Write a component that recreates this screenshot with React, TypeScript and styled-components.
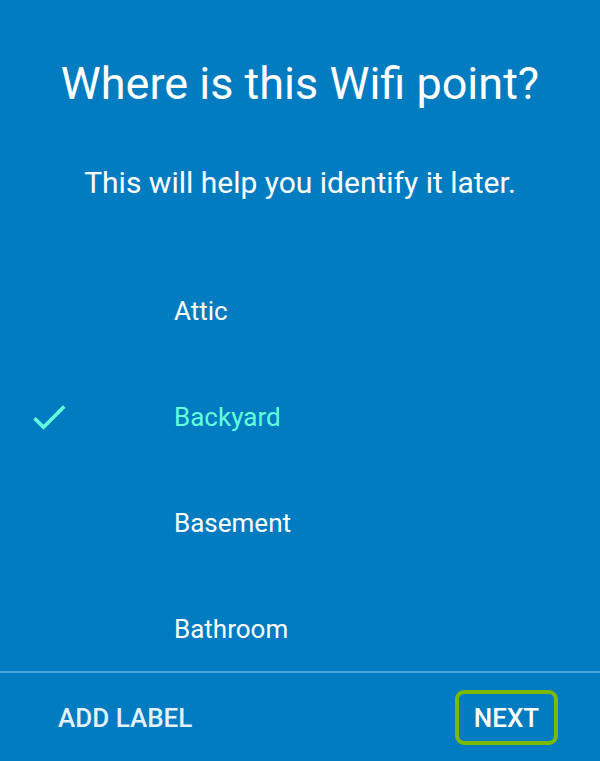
import React, { useState } from "react";
import styled, { createGlobalStyle } from "styled-components";

const GlobalStyle = createGlobalStyle`
  html, body {
    margin: 0;
    padding: 0;
    background: #017cc0;
  }
  body {
    font-family: Roboto, "Noto Sans", "Liberation Sans", sans-serif;
    -webkit-font-smoothing: antialiased;
  }
  * { box-sizing: border-box; }
`;

const Screen = styled.div`
  width: 600px;
  height: 761px;
  background: #017cc0;
  color: #ffffff;
  display: flex;
  flex-direction: column;
  overflow: hidden;
`;

const Header = styled.header`
  display: flex;
  flex-direction: column;
  align-items: center;
  padding-top: 58px;
`;

const Title = styled.h1`
  margin: 0;
  font-size: 45px;
  line-height: 52px;
  font-weight: 400;
  text-align: center;
`;

const Subtitle = styled.p`
  margin: 55px 0 0;
  font-size: 30px;
  line-height: 36px;
  font-weight: 400;
  text-align: center;
`;

const List = styled.ul`
  list-style: none;
  margin: 57px 0 0;
  padding: 0;
  flex: 1;
  overflow: hidden;
`;

const Row = styled.li<{ $selected: boolean }>`
  height: 106px;
  display: grid;
  grid-template-columns: 44px 1fr;
  column-gap: 103px;
  align-items: center;
  padding-left: 27px;
  font-size: 26px;
  color: ${(p) => (p.$selected ? "#64ffda" : "#ffffff")};
  cursor: pointer;
`;

const CheckSlot = styled.span`
  width: 44px;
  height: 44px;
  display: flex;
`;

const Footer = styled.footer`
  flex: 0 0 90px;
  border-top: 2px solid #4fa6da;
  display: flex;
  align-items: center;
  justify-content: space-between;
  padding: 0 42px 0 58px;
`;

const TextButton = styled.button`
  background: none;
  border: none;
  padding: 2px 0 0;
  font-family: inherit;
  font-size: 26px;
  line-height: 32px;
  font-weight: 500;
  color: #e3f1fb;
`;

const NextButton = styled.button`
  background: none;
  border: 4px solid #7cb905;
  border-radius: 9px;
  height: 55px;
  width: 103px;
  padding: 2px 0 0;
  font-family: inherit;
  font-size: 26px;
  line-height: 32px;
  font-weight: 500;
  color: #ffffff;
`;

const CheckIcon = () => (
  <svg width="44" height="44" viewBox="0 0 24 24" fill="#64ffda">
    <path d="M9 16.17L4.83 12l-1.42 1.41L9 19 21 7l-1.41-1.41z" />
  </svg>
);

const places = ["Attic", "Backyard", "Basement", "Bathroom"];

export default function App() {
  const [selected, setSelected] = useState("Backyard");
  return (
    <>
      <GlobalStyle />
      <Screen>
        <Header>
          <Title>Where is this Wifi point?</Title>
          <Subtitle>This will help you identify it later.</Subtitle>
        </Header>
        <List>
          {places.map((name) => (
            <Row
              key={name}
              $selected={name === selected}
              onClick={() => setSelected(name)}
            >
              <CheckSlot>{name === selected && <CheckIcon />}</CheckSlot>
              <span>{name}</span>
            </Row>
          ))}
        </List>
        <Footer>
          <TextButton>ADD LABEL</TextButton>
          <NextButton>NEXT</NextButton>
        </Footer>
      </Screen>
    </>
  );
}
